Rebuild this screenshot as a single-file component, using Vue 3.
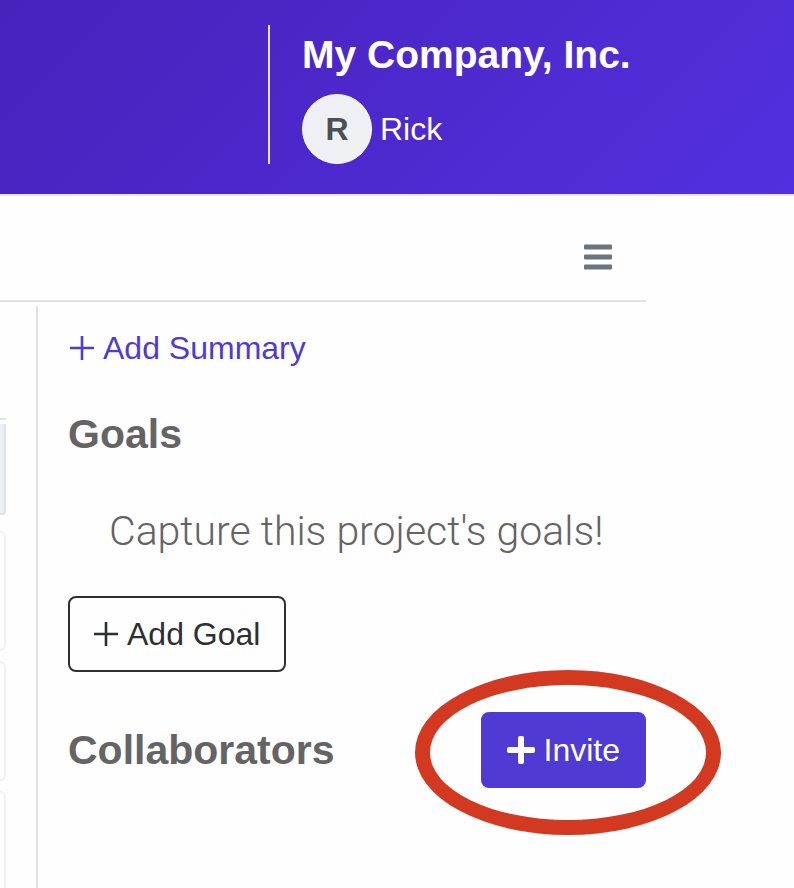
<script setup>
const company = 'My Company, Inc.'
const user = { name: 'Rick', initial: 'R' }
const cards = [1, 2, 3]
</script>

<template>
  <div class="page">
    <header class="topbar">
      <div class="account">
        <h1 class="company">{{ company }}</h1>
        <div class="user">
          <span class="avatar">{{ user.initial }}</span>
          <span>{{ user.name }}</span>
        </div>
      </div>
    </header>

    <div class="content">
      <div class="toolbar">
        <button class="menu" type="button" aria-label="Menu">
          <svg viewBox="0 0 28 26" width="28" height="26" fill="currentColor">
            <rect x="0" y="0.6" width="28" height="4.8" rx="1" />
            <rect x="0" y="10.6" width="28" height="4.8" rx="1" />
            <rect x="0" y="20.6" width="28" height="4.8" rx="1" />
          </svg>
        </button>
      </div>

      <div class="columns">
        <div class="list">
          <div class="list-rule"></div>
          <div class="list-head"></div>
          <div v-for="card in cards" :key="card" class="card"></div>
        </div>

        <main class="details">
          <a class="summary" href="#">
            <svg class="plus" viewBox="0 0 24 24" width="24" height="24" stroke="currentColor" stroke-width="2.6">
              <path d="M12 0V24M0 12H24" />
            </svg>
            Add Summary
          </a>

          <h2 class="heading goals">Goals</h2>
          <p class="hint">Capture this project's goals!</p>
          <button class="btn btn-outline" type="button">
            <svg class="plus" viewBox="0 0 24 24" width="24" height="24" stroke="currentColor" stroke-width="2.6">
              <path d="M12 0V24M0 12H24" />
            </svg>
            Add Goal
          </button>

          <div class="collaborators">
            <h2 class="heading">Collaborators</h2>
            <div class="invite">
              <button class="btn btn-primary" type="button">
                <svg class="plus" viewBox="0 0 28 28" width="28" height="28" fill="currentColor">
                  <rect x="11" y="0" width="6" height="28" rx="2" />
                  <rect x="0" y="11" width="28" height="6" rx="2" />
                </svg>
                Invite
              </button>
              <span class="ring"></span>
            </div>
          </div>
        </main>
      </div>
    </div>
  </div>
</template>

<style>
body {
  background: #fefefe;
}
</style>

<style scoped>
.page {
  display: flex;
  flex-direction: column;
  min-height: 100vh;
  font-family: "Helvetica Neue", "Liberation Sans", Arial, sans-serif;
  font-size: 32px;
  line-height: 48px;
  color: #646464;
}

.topbar {
  display: flex;
  justify-content: flex-end;
  padding: 25px 148px 30px 0;
  border-bottom: 2px solid #e6e6ef;
  background: linear-gradient(135deg, #4722bb, #5230df);
  background-clip: padding-box;
  color: #fff;
}

.account {
  box-sizing: border-box;
  width: 378px;
  padding: 6px 0 0 32px;
  border-left: 2px solid #e4e0f4;
}

.company {
  margin: 0;
  font-size: 39px;
  font-weight: 700;
  line-height: 48px;
  white-space: nowrap;
}

.user {
  display: flex;
  align-items: center;
  gap: 8px;
  margin-top: 15px;
}

.avatar {
  display: flex;
  align-items: center;
  justify-content: center;
  box-sizing: border-box;
  width: 70px;
  height: 70px;
  border: 1px solid #fff;
  border-radius: 50%;
  background: #eef0f4;
  color: #495057;
  font-weight: 700;
}

.content {
  display: flex;
  flex: 1;
  flex-direction: column;
  margin-right: 148px;
}

.toolbar {
  display: flex;
  justify-content: flex-end;
  align-items: center;
  box-sizing: border-box;
  height: 106px;
  padding: 18px 34px 0 0;
  border-bottom: 2px solid #dee2e6;
}

.menu {
  display: flex;
  padding: 0;
  border: 0;
  background: none;
  color: #6c757d;
}

.columns {
  display: flex;
  flex: 1;
  margin-top: 4px;
}

.list {
  display: flex;
  flex-direction: column;
  width: 6px;
  margin-right: 30px;
  padding-top: 112px;
}

.list-rule {
  height: 2px;
  margin-bottom: 4px;
  background: #dee2e6;
}

.list-head {
  box-sizing: border-box;
  height: 91px;
  margin-bottom: 16px;
  border: solid #dee2e6;
  border-width: 0 2px 2px 0;
  border-radius: 0 0 4px 0;
  background: #edeff4;
}

.card {
  box-sizing: border-box;
  height: 120px;
  margin-bottom: 10px;
  border: 2px solid #f1f1f1;
  border-left: 0;
  border-radius: 0 8px 8px 0;
}

.card:last-child {
  flex: 1;
  height: auto;
  margin-bottom: 0;
  border-bottom: 0;
  border-radius: 0 8px 0 0;
}

.details {
  flex: 1;
  padding: 18px 0 40px 30px;
  border-left: 2px solid #dee2e6;
}

.summary {
  display: flex;
  align-items: center;
  gap: 9px;
  padding-left: 2px;
  color: #4f3ad4;
  text-decoration: none;
}

.plus {
  flex: none;
}

.heading {
  margin: 0;
  font-size: 41px;
  font-weight: 700;
  line-height: 50px;
}

.goals {
  margin-top: 37px;
}

.hint {
  margin: 47px 0 40px;
  padding-left: 41px;
  font-family: "Helvetica Neue", Roboto, sans-serif;
  font-size: 41px;
  font-weight: 300;
  line-height: 50px;
  white-space: nowrap;
}

.btn {
  display: flex;
  align-items: center;
  gap: 9px;
  box-sizing: border-box;
  height: 76px;
  padding: 0 24px;
  border: 2px solid;
  border-radius: 8px;
  font: inherit;
  white-space: nowrap;
}

.btn-outline {
  border-color: #2d2f31;
  background: transparent;
  color: #2d2f31;
}

.btn-primary {
  border-color: #4f3ad4;
  background: #4f3ad4;
  color: #fff;
}

.collaborators {
  display: flex;
  align-items: center;
  justify-content: space-between;
  margin-top: 40px;
}

.invite {
  position: relative;
}

/* Highlight drawn over the invite button */
.ring {
  position: absolute;
  inset: -42px -75px -47px -66px;
  border: 15px solid #d23920;
  border-radius: 50%;
  pointer-events: none;
}
</style>
